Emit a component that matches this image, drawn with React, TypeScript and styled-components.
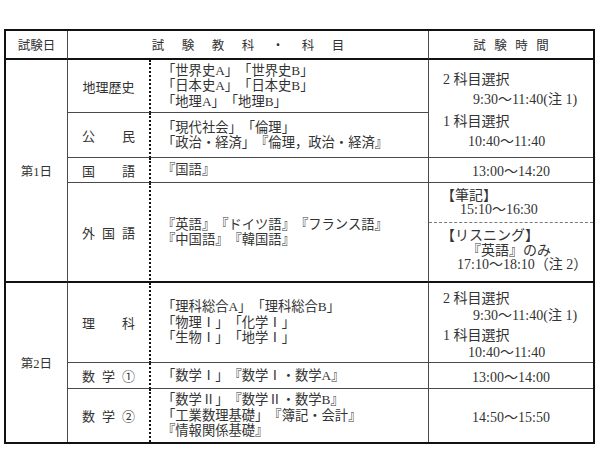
import React from 'react'
import styled, { createGlobalStyle } from 'styled-components'

const ink = '#333'
const rule = '#4a4a4a'
const heavy = '#111'

type Edge = 'thin' | 'thick' | 'none' | 'dotted'

const edge = (e: Edge = 'thin') => {
  if (e === 'thick') return `2px solid ${heavy}`
  if (e === 'dotted') return `2px dotted ${heavy}`
  if (e === 'none') return 'none'
  return `1px solid ${rule}`
}

const GlobalStyle = createGlobalStyle`
  html, body {
    margin: 0;
    padding: 0;
    background: #fff;
  }
  body {
    font-family: "Liberation Serif", "Noto Sans CJK JP", serif;
    color: ${ink};
    text-spacing-trim: space-all;
  }
`

const Page = styled.div`
  width: 600px;
  height: 451px;
  box-sizing: border-box;
  padding: 29px 0 0 4px;
`

const Schedule = styled.div`
  display: grid;
  grid-template-columns: 62px 83px 278px 164px;
  grid-template-rows: 29px 53px 45px 25px 100px 80px 26px 53px;
  width: 591px;
  box-sizing: border-box;
  border: 2px solid ${heavy};
`

const Cell = styled.div<{ $rows?: number; $cols?: number; $bottom?: Edge; $right?: Edge }>`
  grid-row: span ${(p) => p.$rows ?? 1};
  grid-column: span ${(p) => p.$cols ?? 1};
  box-sizing: border-box;
  min-width: 0;
  border-bottom: ${(p) => edge(p.$bottom)};
  border-right: ${(p) => edge(p.$right)};
`

// # Header
const HeadCell = styled(Cell)<{ $spacing?: number }>`
  display: flex;
  align-items: center;
  justify-content: center;
  font-size: 12.5px;
  letter-spacing: ${(p) => p.$spacing ?? 0}px;
  padding-left: ${(p) => p.$spacing ?? 0}px;
  white-space: nowrap;
`

// # Body
const DayCell = styled(Cell)`
  display: flex;
  align-items: center;
  justify-content: center;
  font-size: 12.5px;
`

const SubjectCell = styled(Cell)`
  display: flex;
  align-items: center;
  justify-content: center;
  font-size: 13px;
`

const Label = styled.span`
  display: flex;
  justify-content: space-between;
  width: 53px;
`

const ListCell = styled(Cell)`
  display: flex;
  flex-direction: column;
  justify-content: center;
  padding-left: 11px;
  font-size: 13.3px;
  line-height: 15.5px;
  white-space: nowrap;
`

const TimeCell = styled(Cell)<{ $center?: boolean; $top?: number }>`
  display: flex;
  flex-direction: column;
  justify-content: ${(p) => (p.$center ? 'center' : 'flex-start')};
  align-items: ${(p) => (p.$center ? 'center' : 'stretch')};
  padding-top: ${(p) => p.$top ?? 0}px;
  font-size: 14px;
  white-space: nowrap;
`

const TimeGroup = styled.div<{ $lh: number; $gap?: number; $pad?: number; $split?: boolean; $height?: number }>`
  box-sizing: border-box;
  line-height: ${(p) => p.$lh}px;
  margin-top: ${(p) => p.$gap ?? 0}px;
  padding-top: ${(p) => p.$pad ?? 0}px;
  height: ${(p) => (p.$height ? `${p.$height}px` : 'auto')};
  border-top: ${(p) => (p.$split ? '1px dashed #7a7a7a' : 'none')};
`

const Line = styled.div<{ $indent: number }>`
  padding-left: ${(p) => p.$indent}px;
`

const Spaced = ({ text }: { text: string }) => (
  <Label>
    {[...text].map((c, i) => (
      <span key={i}>{c}</span>
    ))}
  </Label>
)

const List = ({ lines }: { lines: string[] }) => (
  <>
    {lines.map((l, i) => (
      <div key={i}>{l}</div>
    ))}
  </>
)

const Selection = ({ lh, gap }: { lh: number; gap: number }) => (
  <>
    <TimeGroup $lh={lh}>
      <Line $indent={14}>2 科目選択</Line>
      <Line $indent={44}>9:30～11:40(注 1)</Line>
    </TimeGroup>
    <TimeGroup $lh={lh} $gap={gap}>
      <Line $indent={14}>1 科目選択</Line>
      <Line $indent={39}>10:40～11:40</Line>
    </TimeGroup>
  </>
)

export default function App() {
  return (
    <Page>
      <GlobalStyle />
      <Schedule>
        {/* Header */}
        <HeadCell $bottom='thick'>試験日</HeadCell>
        <HeadCell $cols={2} $bottom='thick' $spacing={17.5}>試験教科・科目</HeadCell>
        <HeadCell $bottom='thick' $right='none' $spacing={8.5}>試験時間</HeadCell>

        {/* 第1日 */}
        <DayCell $rows={4} $bottom='thick'>第1日</DayCell>
        <SubjectCell $right='dotted'>地理歴史</SubjectCell>
        <ListCell>
          <List lines={['「世界史A」「世界史B」', '「日本史A」「日本史B」', '「地理A」「地理B」']} />
        </ListCell>
        <TimeCell $rows={2} $right='none' $top={10}>
          <Selection lh={20} gap={2} />
        </TimeCell>

        <SubjectCell $right='dotted'><Spaced text='公民' /></SubjectCell>
        <ListCell>
          <List lines={['「現代社会」「倫理」', '「政治・経済」『倫理，政治・経済』']} />
        </ListCell>

        <SubjectCell $right='dotted'><Spaced text='国語' /></SubjectCell>
        <ListCell>『国語』</ListCell>
        <TimeCell $right='none' $center>13:00～14:20</TimeCell>

        <SubjectCell $right='dotted' $bottom='thick'><Spaced text='外国語' /></SubjectCell>
        <ListCell $bottom='thick'>
          <List lines={['『英語』『ドイツ語』『フランス語』', '『中国語』『韓国語』']} />
        </ListCell>
        <TimeCell $right='none' $bottom='thick'>
          <TimeGroup $lh={14} $pad={6} $height={39}>
            <Line $indent={12}>【筆記】</Line>
            <Line $indent={31}>15:10～16:30</Line>
          </TimeGroup>
          <TimeGroup $lh={14.5} $pad={6} $split>
            <Line $indent={12}>【リスニング】</Line>
            <Line $indent={38}>『英語』のみ</Line>
            <Line $indent={28}>17:10～18:10（注 2）</Line>
          </TimeGroup>
        </TimeCell>

        {/* 第2日 */}
        <DayCell $rows={3} $bottom='none'>第2日</DayCell>
        <SubjectCell $right='dotted'><Spaced text='理科' /></SubjectCell>
        <ListCell>
          <List lines={['「理科総合A」「理科総合B」', '「物理Ⅰ」「化学Ⅰ」', '「生物Ⅰ」「地学Ⅰ」']} />
        </ListCell>
        <TimeCell $right='none' $top={8}>
          <Selection lh={16.5} gap={4} />
        </TimeCell>

        <SubjectCell $right='dotted'><Spaced text='数学①' /></SubjectCell>
        <ListCell>「数学Ⅰ」『数学Ⅰ・数学A』</ListCell>
        <TimeCell $right='none' $center>13:00～14:00</TimeCell>

        <SubjectCell $right='dotted' $bottom='none'><Spaced text='数学②' /></SubjectCell>
        <ListCell $bottom='none'>
          <List lines={['「数学Ⅱ」『数学Ⅱ・数学B』', '「工業数理基礎」『簿記・会計』', '『情報関係基礎』']} />
        </ListCell>
        <TimeCell $right='none' $bottom='none' $center>14:50～15:50</TimeCell>
      </Schedule>
    </Page>
  )
}
